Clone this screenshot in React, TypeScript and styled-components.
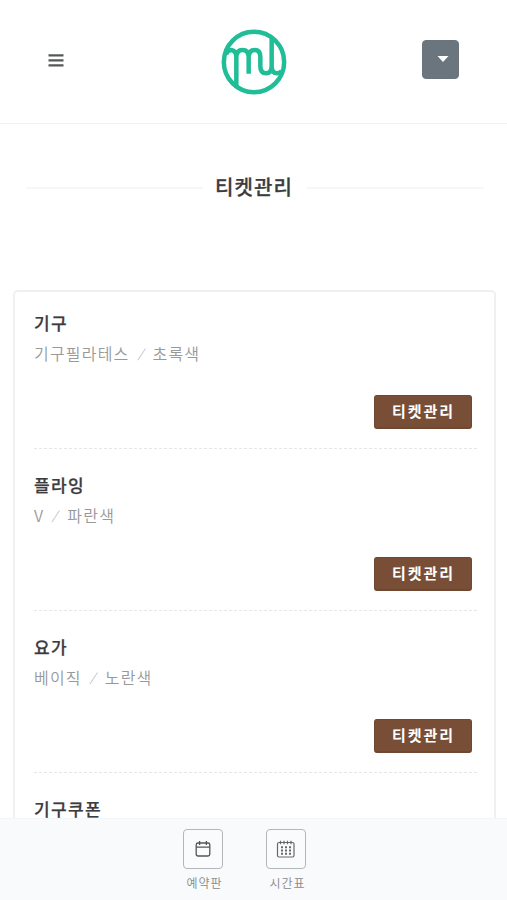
import React from "react";
import styled, { createGlobalStyle } from "styled-components";

const Global = createGlobalStyle`
  * { box-sizing: border-box; }
  body {
    margin: 0;
    background: #fff;
    font-family: "Noto Sans CJK KR", "Noto Sans", sans-serif;
    color: #3c3c40;
  }
`;

const Page = styled.div`
  height: 900px;
  display: flex;
  flex-direction: column;
  overflow: hidden;
`;

const Header = styled.header`
  flex: none;
  height: 124px;
  padding: 0 48px;
  display: grid;
  grid-template-columns: 1fr 66px 1fr;
  align-items: center;
  border-bottom: 1px solid #f0f0f0;
`;

const MenuButton = styled.button`
  width: 16px;
  height: 14px;
  margin-top: -3px;
  padding: 0;
  border: 0;
  background: none;
  display: flex;
`;

const Logo = styled.svg`
  width: 66px;
  height: 66px;
`;

const DropButton = styled.button`
  justify-self: end;
  width: 37px;
  height: 39px;
  margin-top: -4px;
  padding: 0 0 2px 4px;
  border: 1px solid #69747c;
  border-radius: 4px;
  background: #6a757d;
  display: flex;
  align-items: center;
  justify-content: center;
`;

const Main = styled.main`
  flex: 1;
  min-height: 0;
  overflow: hidden;
`;

const Heading = styled.div`
  display: flex;
  align-items: center;
  height: 30px;
  margin: 48px 23px 88px 26px;
`;

const Rule = styled.span`
  flex: 1;
  height: 2px;
  margin-top: 1px;
  background: #f7f7f7;
`;

const Title = styled.h1`
  margin: 0 14px 0 12px;
  font-size: 20px;
  line-height: 30px;
  font-weight: 500;
  letter-spacing: 1.1px;
  -webkit-text-stroke: 0.25px;
`;

const Card = styled.section`
  margin: 0 11px 0 13px;
  padding: 0 17px 0 19px;
  border: 2px solid #f0f0f0;
  border-radius: 5px;
`;

const Item = styled.article`
  height: 162px;
  padding-top: 19px;
  display: flex;
  flex-direction: column;
  border-bottom: 1px dashed #e6e6e6;

  &:first-child {
    height: 157px;
    padding-top: 14px;
  }
`;

const ItemTitle = styled.h2`
  margin: 2px 0 0;
  font-size: 17px;
  line-height: 30px;
  font-weight: 500;
  letter-spacing: 1.4px;
  -webkit-text-stroke: 0.25px;
`;

const Detail = styled.p`
  display: flex;
  margin: 0;
  font-size: 16px;
  line-height: 30px;
  font-weight: 350;
  letter-spacing: 1.2px;
  color: #999;
`;

const Slash = styled.span`
  width: 10px;
  margin: 0 6px 0 7px;
  font-size: 12px;
  line-height: 30px;
  font-weight: 300;
  letter-spacing: 0;
  text-align: center;
  transform: skewX(-18deg);
`;

const TicketButton = styled.button`
  align-self: flex-end;
  width: 98px;
  height: 34px;
  margin: 27px 5px 0 0;
  padding: 0 0 1px 1px;
  border: 1px solid #6f4831;
  border-bottom-width: 2px;
  border-radius: 3px;
  background: #784e36;
  color: #fff;
  font-family: inherit;
  font-size: 15px;
  line-height: 28px;
  font-weight: 700;
  letter-spacing: 2px;
`;

const BottomBar = styled.nav`
  flex: none;
  height: 82px;
  padding: 10px 18px 0 0;
  display: flex;
  justify-content: center;
  gap: 43px;
  border-top: 1px solid #f3f5f6;
  background: #f8fafc;
`;

const Tab = styled.div`
  width: 40px;
  display: flex;
  flex-direction: column;
  align-items: center;
`;

const TabIcon = styled.span`
  width: 40px;
  height: 40px;
  display: flex;
  align-items: center;
  justify-content: center;
  border: 1px solid #b4b6b8;
  border-radius: 4px;
  background: #fafbfc;
`;

const TabLabel = styled.span`
  margin: 5px 0 0 3px;
  font-size: 12px;
  line-height: 18px;
  font-weight: 350;
  letter-spacing: 1px;
  white-space: nowrap;
  color: #888;
`;

const items = [
  { name: "기구", detail: ["기구필라테스", "초록색"] },
  { name: "플라잉", detail: ["V", "파란색"] },
  { name: "요가", detail: ["베이직", "노란색"] },
  { name: "기구쿠폰" },
];

const BoardIcon = () => (
  <svg width="16" height="18" viewBox="0 0 16 18" fill="none" stroke="#535557" strokeWidth="1.3">
    <rect x="1.2" y="3" width="13.6" height="13" rx="1.8" />
    <path d="M1 7.2h14M4.6 1v4M11.4 1v4" />
  </svg>
);

const TimetableIcon = () => (
  <svg width="20" height="18" viewBox="0 0 20 18" fill="none" stroke="#66686a">
    <rect x="1.5" y="2.5" width="16.5" height="14.5" rx="1.5" strokeWidth="1.2" />
    <path d="M4.5 .8v3.4M8 .8v3.4M11.5 .8v3.4M15 .8v3.4" strokeWidth="1.2" />
    <path d="M5 7.2h10M5 10.5h10M5 13.8h10" strokeWidth="2" strokeDasharray="2 2" />
  </svg>
);

export default function App() {
  return (
    <Page>
      <Global />
      <Header>
        <MenuButton aria-label="메뉴">
          <svg width="16" height="14" viewBox="0 0 16 14" stroke="#555859" strokeWidth="2.2">
            <path d="M.5 2.3h15M.5 7.3h15M.5 12.3h15" />
          </svg>
        </MenuButton>
        <Logo viewBox="64 28 198 198" fill="none" stroke="#20bd97" strokeWidth="13.5">
          <circle cx="163" cy="127" r="90.5" />
          <path d="M79 104Q84 91 95 91Q110 93 110 112V205M110 112Q111 91 128 91Q147 91 147 112V162M147 112Q148 91 165 91Q182 91 182 112V140Q182 161 199 161Q216 161 216 140V54M216 140Q216 161 232 161Q240 161 246 154" />
        </Logo>
        <DropButton aria-label="더보기">
          <svg width="12" height="6" viewBox="0 0 12 6" fill="#fff">
            <path d="M.5 0h11L6 6z" />
          </svg>
        </DropButton>
      </Header>
      <Main>
        <Heading>
          <Rule />
          <Title>티켓관리</Title>
          <Rule />
        </Heading>
        <Card>
          {items.map((item) => (
            <Item key={item.name}>
              <ItemTitle>{item.name}</ItemTitle>
              {item.detail && (
                <>
                  <Detail>
                    <span>{item.detail[0]}</span>
                    <Slash>/</Slash>
                    <span>{item.detail[1]}</span>
                  </Detail>
                  <TicketButton>티켓관리</TicketButton>
                </>
              )}
            </Item>
          ))}
        </Card>
      </Main>
      <BottomBar>
        <Tab>
          <TabIcon><BoardIcon /></TabIcon>
          <TabLabel>예약판</TabLabel>
        </Tab>
        <Tab>
          <TabIcon><TimetableIcon /></TabIcon>
          <TabLabel>시간표</TabLabel>
        </Tab>
      </BottomBar>
    </Page>
  );
}
